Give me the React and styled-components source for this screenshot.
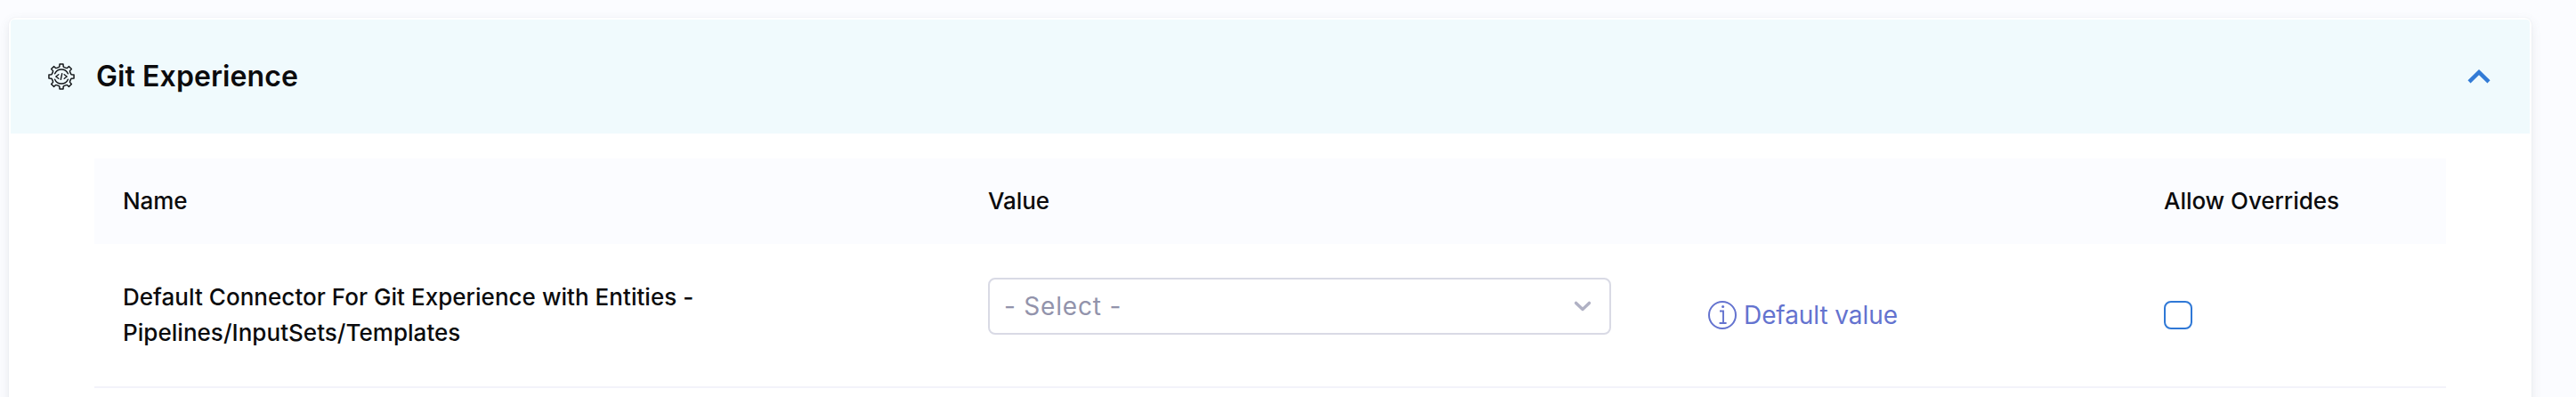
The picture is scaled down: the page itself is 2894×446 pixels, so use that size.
import React from "react";
import styled, { createGlobalStyle } from "styled-components";

const GlobalStyle = createGlobalStyle`
  *, *::before, *::after { box-sizing: border-box; }
  body {
    margin: 0;
    background: #fbfcff;
    color: #0b0b0d;
    font-family: Inter, "Liberation Sans", sans-serif;
    overflow: hidden;
  }
`;

const Page = styled.main`
  height: 446px;
  padding: 20px 50px 0 10px;
  overflow: hidden;
`;

const Card = styled.section`
  height: 560px;
  padding: 2px;
  background: #fff;
  border-radius: 8px;
  box-shadow: 0 0 2px rgba(40, 41, 61, 0.06), 0 4px 12px rgba(96, 97, 112, 0.13);
`;

const CardHeader = styled.header`
  display: flex;
  align-items: center;
  height: 128px;
  padding: 0 44px 0 42px;
  background: #f0fafd;
  border-radius: 4px 4px 0 0;
`;

const Title = styled.h2`
  flex: 1;
  margin: 0 0 0 24px;
  font-size: 32px;
  line-height: 40px;
  font-weight: 600;
  letter-spacing: 0.1px;
`;

const Table = styled.div`
  margin: 28px 94px 0;
`;

const Row = styled.div`
  display: grid;
  grid-template-columns: 972px 808px 513px 1fr;
  padding-left: 32px;
`;

const HeadRow = styled(Row)`
  align-items: center;
  height: 96px;
  background: #fbfcff;
`;

const BodyRow = styled(Row)`
  height: 162px;
  border-bottom: 2px solid #f3f3fa;
`;

const HeadCell = styled.div`
  font-size: 26px;
  line-height: 40px;
  font-weight: 500;
  letter-spacing: -0.05px;
`;

const NameCell = styled.div`
  width: 680px;
  padding-top: 40px;
  font-size: 26px;
  line-height: 40px;
  font-weight: 500;
  letter-spacing: 0.035px;
`;

const Cell = styled.div`
  padding-top: ${(p) => p.$top}px;
`;

const Select = styled.div`
  display: flex;
  align-items: center;
  justify-content: space-between;
  width: 700px;
  height: 64px;
  padding: 0 21px 0 16px;
  border: 2px solid #d9dae5;
  border-radius: 8px;
  background: #fff;
`;

const Placeholder = styled.span`
  color: #9293ab;
  font-size: 28px;
  line-height: 36px;
  letter-spacing: 0.8px;
`;

const DefaultValue = styled.div`
  display: flex;
  align-items: center;
  gap: 8px;
  height: 32px;
  padding-left: 1px;
  color: #6473cf;
  font-size: 28px;
  line-height: 32px;
  letter-spacing: -0.08px;
`;

const Checkbox = styled.div`
  width: 32px;
  height: 32px;
  border: 2px solid #2f78d6;
  border-radius: 8px;
  background: #fff;
`;

const Icon = styled.svg`
  display: block;
  flex: none;
  overflow: visible;
`;

const TEETH = [0, 45, 90, 135, 180, 225, 270, 315];

// Builds a closed outline with one tooth every 45 degrees.
function gearOutline() {
  const profile = [
    [-17, 10.9],
    [-11, 11.4],
    [-8, 14.2],
    [8, 14.2],
    [11, 11.4],
    [17, 10.9],
  ];
  const points = TEETH.flatMap((base) =>
    profile.map(([offset, radius]) => {
      const a = ((base + offset) * Math.PI) / 180;
      return `${(radius * Math.sin(a)).toFixed(2)} ${(-radius * Math.cos(a)).toFixed(2)}`;
    })
  );
  return `M${points.join("L")}Z`;
}

function GearCodeIcon() {
  return (
    <Icon width="30" height="30" viewBox="-15 -15 30 30" fill="none" stroke="#15181b" strokeWidth="1.5" strokeLinecap="round" strokeLinejoin="round">
      <path d={gearOutline()} />
      <path d="M-7.4 -3.2A8.1 8.1 0 0 1 7.4 -3.2M7.4 3.2A8.1 8.1 0 0 1 -7.4 3.2" />
      <path d="M-3.2 -2.3L-6.2 0L-3.2 2.3M3.2 -2.3L6.2 0L3.2 2.3M0.7 -3.4L-0.7 3.4" strokeWidth="1.4" />
    </Icon>
  );
}

function ChevronUpIcon() {
  return (
    <Icon width="26" height="16" viewBox="0 0 26 16" fill="none" stroke="#327bd6" strokeWidth="4.4">
      <path d="M2 13.9L13 3.1L24 13.9" />
    </Icon>
  );
}

function ChevronDownIcon() {
  return (
    <Icon width="18" height="10" viewBox="0 0 18 10" fill="none" stroke="#b0b1c4" strokeWidth="3.4" strokeLinecap="round" strokeLinejoin="round">
      <path d="M1.6 1.4L9 8.5L16.4 1.4" />
    </Icon>
  );
}

function InfoIcon() {
  return (
    <Icon width="32" height="32" viewBox="0 0 32 32" fill="none" stroke="#6473cf" strokeWidth="2">
      <circle cx="16" cy="16" r="15" />
      <path d="M13 11.5H17V25M12.6 25H20.6" strokeWidth="1.9" />
      <circle cx="16.6" cy="6.4" r="1.5" fill="#6473cf" stroke="none" />
    </Icon>
  );
}

export default function App() {
  return (
    <>
      <GlobalStyle />
      <Page>
        <Card>
          <CardHeader>
            <GearCodeIcon />
            <Title>Git Experience</Title>
            <ChevronUpIcon />
          </CardHeader>
          <Table>
            <HeadRow>
              <HeadCell>Name</HeadCell>
              <HeadCell>Value</HeadCell>
              <HeadCell />
              <HeadCell>Allow Overrides</HeadCell>
            </HeadRow>
            <BodyRow>
              <NameCell>
                Default Connector For Git Experience with Entities - Pipelines/InputSets/Templates
              </NameCell>
              <Cell $top={38}>
                <Select>
                  <Placeholder>- Select -</Placeholder>
                  <ChevronDownIcon />
                </Select>
              </Cell>
              <Cell $top={64}>
                <DefaultValue>
                  <InfoIcon />
                  Default value
                </DefaultValue>
              </Cell>
              <Cell $top={64}>
                <Checkbox />
              </Cell>
            </BodyRow>
          </Table>
        </Card>
      </Page>
    </>
  );
}
